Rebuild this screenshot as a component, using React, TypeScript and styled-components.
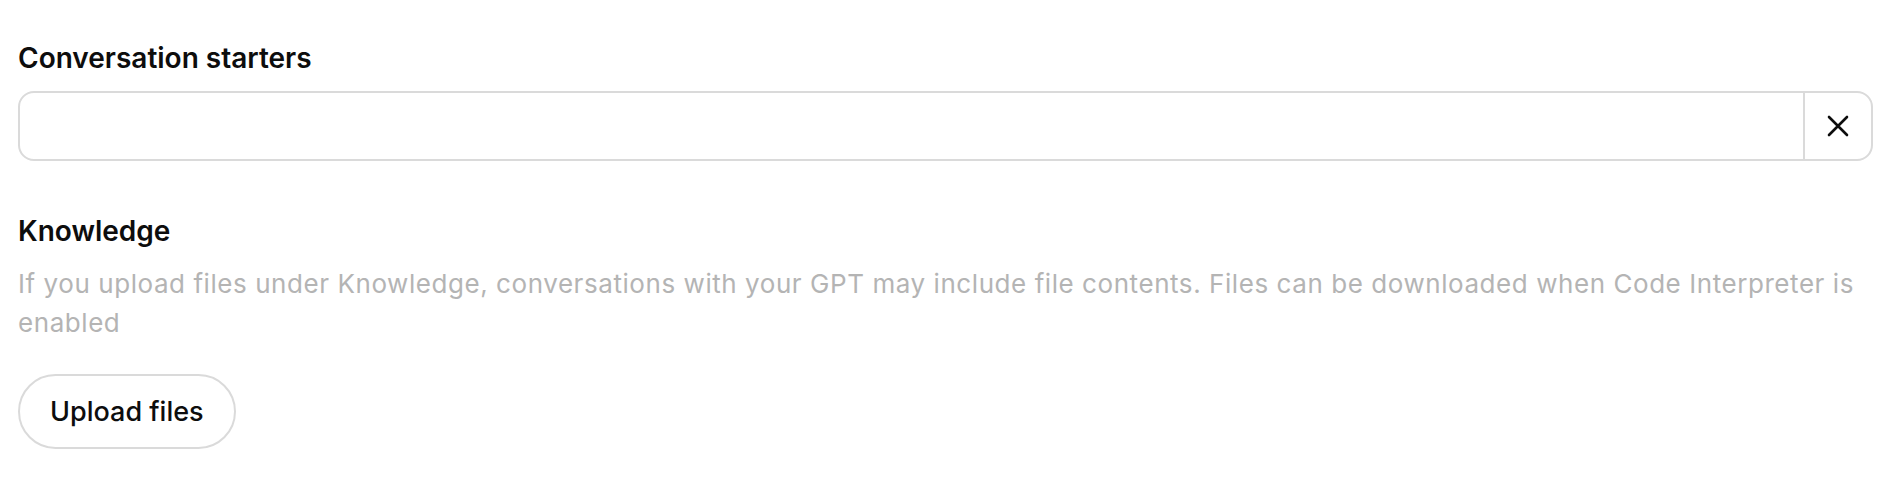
import React from 'react';
import styled, { createGlobalStyle } from 'styled-components';

const GlobalStyle = createGlobalStyle`
  body {
    margin: 0;
    background: #ffffff;
    font-family: Inter, 'Noto Sans', sans-serif;
    color: #0d0d0d;
  }
`;

const StyledPage = styled.div`
  padding: 40px 29px 0 18px;
  display: flex;
  flex-direction: column;
`;

const StyledLabel = styled.div<{ $gap?: number }>`
  font-size: 28px;
  line-height: 36px;
  font-weight: 600;
  margin-bottom: ${(p) => p.$gap ?? 15}px;
`;

const StyledStarterRow = styled.div`
  display: flex;
  height: 70px;
  box-sizing: border-box;
  border: 2px solid #dadada;
  border-radius: 16px;
  overflow: hidden;
`;

const StyledStarterInput = styled.input`
  flex: 1;
  border: none;
  outline: none;
  padding: 0 22px;
  font-family: inherit;
  font-size: 24px;
  background: transparent;
`;

const StyledRemoveButton = styled.button`
  width: 68px;
  flex: none;
  border: none;
  border-left: 2px solid #dadada;
  background: transparent;
  display: flex;
  align-items: center;
  justify-content: center;
  padding: 0;
  cursor: pointer;
  color: #0d0d0d;
`;

const StyledSection = styled.div`
  margin-top: 52px;
  display: flex;
  flex-direction: column;
  align-items: flex-start;
`;

const StyledHint = styled.p`
  margin: 0 0 32px;
  font-size: 26px;
  line-height: 39px;
  letter-spacing: 0.56px;
  color: #b4b4b4;
`;

const StyledUploadButton = styled.button`
  height: 75px;
  padding: 0 30px;
  border: 2px solid #dadada;
  border-radius: 9999px;
  background: #ffffff;
  font-family: inherit;
  font-size: 27px;
  font-weight: 500;
  color: #0d0d0d;
  cursor: pointer;
`;

const CloseIcon = () => (
  <svg width="22" height="22" viewBox="0 0 22 22" fill="none">
    <path d="M2 2L20 20M20 2L2 20" stroke="currentColor" strokeWidth="2.6" strokeLinecap="round" />
  </svg>
);

const App = () => {
  return (
    <StyledPage>
      <GlobalStyle />
      <StyledLabel>Conversation starters</StyledLabel>
      <StyledStarterRow>
        <StyledStarterInput />
        <StyledRemoveButton aria-label="Remove">
          <CloseIcon />
        </StyledRemoveButton>
      </StyledStarterRow>
      <StyledSection>
        <StyledLabel>Knowledge</StyledLabel>
        <StyledHint>
          If you upload files under Knowledge, conversations with your GPT may include file contents. Files can be
          downloaded when Code Interpreter is enabled
        </StyledHint>
        <StyledUploadButton>Upload files</StyledUploadButton>
      </StyledSection>
    </StyledPage>
  );
};

export default App;
